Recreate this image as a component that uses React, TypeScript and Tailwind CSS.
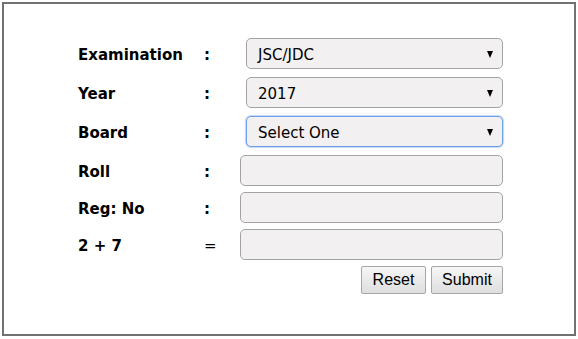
import { useState } from "react";

const labelFont = { fontFamily: '"DejaVu Sans", Verdana, sans-serif' };

function SelectBox({ value, focused }: { value: string; focused?: boolean }) {
  return (
    <div
      className={
        "relative flex h-[31px] w-[257px] items-center rounded-[5px] border bg-[#f3f0f1] pl-[11px] pt-[4px] text-[15px] text-black " +
        (focused
          ? "border-[#6d9fe8] shadow-[0_0_1px_1px_rgba(120,165,235,0.45)]"
          : "border-[#a3a3a3]")
      }
      style={labelFont}
    >
      <span>{value}</span>
      <span className="absolute right-[9px] top-[12px] h-0 w-0 border-x-[3.5px] border-t-[7px] border-x-transparent border-t-black" />
    </div>
  );
}

function TextBox() {
  const [text, setText] = useState("");
  return (
    <input
      value={text}
      onChange={(e) => setText(e.target.value)}
      className="h-[31px] w-[263px] rounded-[5px] border border-[#a3a3a3] bg-[#f3f0f1] px-2 text-[15px] outline-none"
      style={labelFont}
    />
  );
}

function Row({
  label,
  sep,
  children,
  sepWidth,
}: {
  label: string;
  sep: string;
  children: React.ReactNode;
  sepWidth: string;
}) {
  return (
    <div className="flex items-center">
      <div className="w-[126px] pt-[4px] text-[15px] font-bold text-black" style={labelFont}>
        {label}
      </div>
      <div
        className={sepWidth + " pt-[4px] text-[15px] font-bold text-black"}
        style={labelFont}
      >
        {sep}
      </div>
      {children}
    </div>
  );
}

export default function App() {
  return (
    <div className="m-[2px] h-[334px] w-[574px] border-2 border-[#717171] bg-white">
      <div className="flex flex-col pl-[74px] pt-[34px]">
        <div className="flex flex-col gap-[8px]">
          <Row label="Examination" sep=":" sepWidth="w-[42px]">
            <SelectBox value="JSC/JDC" />
          </Row>
          <Row label="Year" sep=":" sepWidth="w-[42px]">
            <SelectBox value="2017" />
          </Row>
          <Row label="Board" sep=":" sepWidth="w-[42px]">
            <SelectBox value="Select One" focused />
          </Row>
        </div>
        <div className="mt-[8px] flex flex-col gap-[6px]">
          <Row label="Roll" sep=":" sepWidth="w-[36px]">
            <TextBox />
          </Row>
          <Row label="Reg: No" sep=":" sepWidth="w-[36px]">
            <TextBox />
          </Row>
          <Row label="2 + 7" sep="=" sepWidth="w-[36px] !font-normal">
            <TextBox />
          </Row>
        </div>
        <div
          className="mt-[6px] flex w-[425px] justify-end gap-[5px]"
          style={{ fontFamily: '"Liberation Sans", Arial, sans-serif' }}
        >
          <button className="h-[28px] w-[65px] rounded-[2px] border border-[#a6a6a6] bg-gradient-to-b from-[#f6f6f6] to-[#dedede] text-[16px] text-black">
            Reset
          </button>
          <button className="h-[28px] w-[72px] rounded-[2px] border border-[#a6a6a6] bg-gradient-to-b from-[#f6f6f6] to-[#dedede] text-[16px] text-black">
            Submit
          </button>
        </div>
      </div>
    </div>
  );
}
